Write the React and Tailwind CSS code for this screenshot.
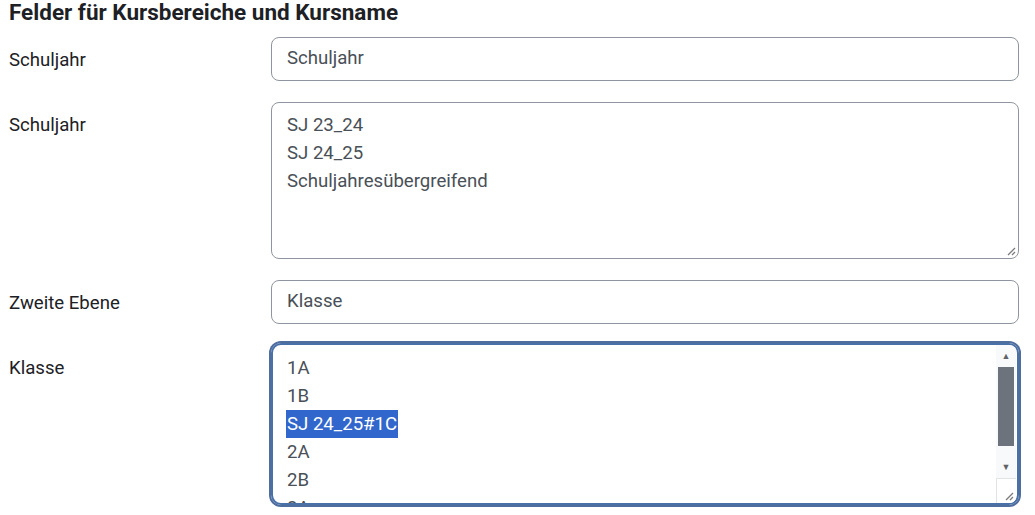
import React from 'react'

const label = 'pt-[9px] leading-[28px] text-[#1d2125]'

function Grip() {
  return (
    <svg width="10" height="10" viewBox="0 0 10 10" className="absolute right-[2px] bottom-[2px]">
      <path d="M9 2 L2 9 M9 6 L6 9" stroke="#7a7a7a" strokeWidth="1.3" />
    </svg>
  )
}

export default function App() {
  const classes = ['1A', '1B', 'SJ 24_25#1C', '2A', '2B', '2A']
  return (
    <div className="bg-white w-[1035px] h-[515px] overflow-hidden pl-[9px] pr-[16px] text-[18.6px]" style={{ fontFamily: 'Roboto, "Liberation Sans", sans-serif' }}>
      <h3 className="text-[22.5px] font-bold leading-[24px] text-[#1d2125]">Felder für Kursbereiche und Kursname</h3>

      <div className="grid grid-cols-[262px_1fr] gap-y-[21px] mt-[13px]">
        <div className={label}>Schuljahr</div>
        <div className="h-[44px] border border-[#8f959e] rounded-[8px] px-[15px] flex items-center text-[#495057]">Schuljahr</div>

        <div className={label}>Schuljahr</div>
        <div className="relative h-[157px] border border-[#8f959e] rounded-[8px] px-[15px] pt-[8px] leading-[28px] text-[#495057]">
          <div>SJ 23_24</div>
          <div>SJ 24_25</div>
          <div>Schuljahresübergreifend</div>
          <Grip />
        </div>

        <div className={label}>Zweite Ebene</div>
        <div className="h-[44px] border border-[#8f959e] rounded-[8px] px-[15px] flex items-center text-[#495057]">Klasse</div>

        <div className={label}>Klasse</div>
        <div className="relative h-[162px] -mt-[2px] border-[2px] border-[#4a70a8] rounded-[10px] ring-[2px] ring-[#4f6e9e] overflow-hidden flex">
          <div className="flex-1 pl-[14px] pt-[9px] leading-[28px] text-[#495057]">
            {classes.map((c, i) => (
              <div key={i} className="h-[28px]">
                <span className={c.startsWith('SJ') ? 'inline-block bg-[#3166cc] text-white px-[1px] -ml-[1px] leading-[28px]' : ''}>{c}</span>
              </div>
            ))}
          </div>
          <div className="w-[20px] bg-[#f8f9fa] flex flex-col items-center mr-[1px]">
            <div className="h-[22px] flex items-center justify-center text-[#5f6368] text-[9px] pt-[2px]">▲</div>
            <div className="w-[16px] h-[79px] bg-[#6c737c]"></div>
            <div className="h-[20px] mt-[12px] flex items-center justify-center text-[#5f6368] text-[9px]">▼</div>
            <div className="relative w-[20px] flex-1 bg-white border-t border-l border-[#e1e3e6]"><Grip /></div>
          </div>
        </div>
      </div>
    </div>
  )
}
